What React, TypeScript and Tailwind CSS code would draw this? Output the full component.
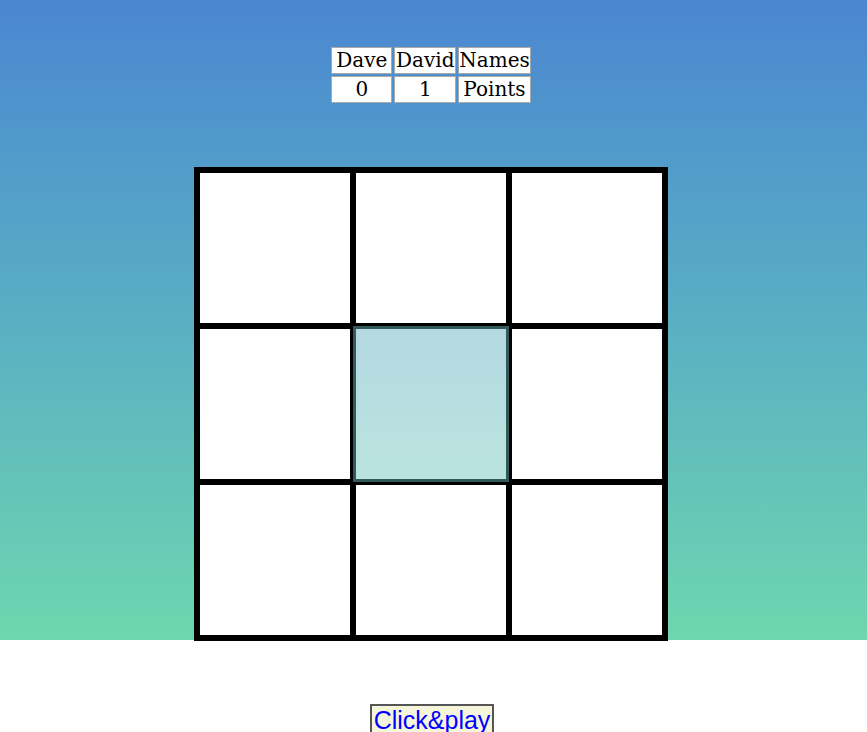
const cells = [0, 1, 2, 3, 4, 5, 6, 7, 8];

function ScoreTable() {
  return (
    <table className="mt-[45px] border-separate border-spacing-[2px] font-['DejaVu_Serif',serif] text-[20px] leading-[25px] text-black">
      <tbody>
        <tr>
          <td className="w-[61px] border border-[#a9a9a9] bg-white p-0 text-center">Dave</td>
          <td className="w-[62px] border border-[#a9a9a9] bg-white p-0 text-center">David</td>
          <td className="w-[70px] border border-[#a9a9a9] bg-white p-0 text-center">Names</td>
        </tr>
        <tr>
          <td className="border border-[#a9a9a9] bg-white p-0 text-center">0</td>
          <td className="border border-[#a9a9a9] bg-white p-0 text-center">1</td>
          <td className="border border-[#a9a9a9] bg-white p-0 text-center">Points</td>
        </tr>
      </tbody>
    </table>
  );
}

function Board() {
  return (
    <div className="mt-[62px] grid grid-cols-3 border-[3px] border-black">
      {cells.map((i) =>
        i === 4 ? (
          <div
            key={i}
            className="h-[156px] w-[156px] border-[3px] border-[#325a5b] bg-gradient-to-b from-[#b4d9e2] to-[#bae4de]"
          />
        ) : (
          <div key={i} className="h-[156px] w-[156px] border-[3px] border-black bg-white" />
        )
      )}
    </div>
  );
}

export default function App() {
  return (
    <div className="min-h-[732px] bg-white">
      <div className="flex h-[640px] flex-col items-center bg-gradient-to-b from-[#4b86d1] to-[#6fd6ae] pr-[5px]">
        <ScoreTable />
        <Board />
      </div>
      <div className="flex justify-center pt-[64px] pr-[3px]">
        <button className="border-2 border-[#555555] bg-[#f5f5dc] px-[2px] font-['Liberation_Sans',Arial,sans-serif] text-[25px] leading-[28px] text-[#0000ff]">
          Click&amp;play
        </button>
      </div>
    </div>
  );
}
